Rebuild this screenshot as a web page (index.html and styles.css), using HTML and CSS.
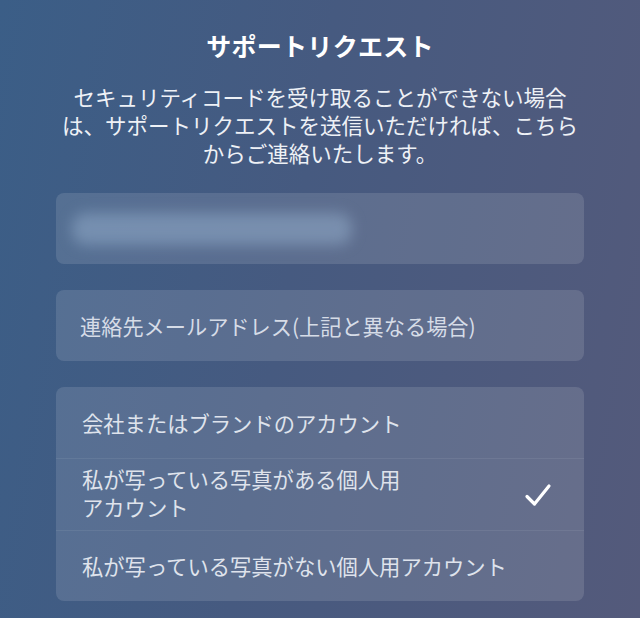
FILE: index.html
```html
<!DOCTYPE html>
<html lang="ja">
<head>
<meta charset="utf-8">
<title>サポートリクエスト</title>
<link rel="stylesheet" href="styles.css">
</head>
<body>
<main class="sheet">
  <h1 class="title">サポートリクエスト</h1>
  <p class="lead">セキュリティコードを受け取ることができない場合<br>は、サポートリクエストを送信いただければ、こちら<br>からご連絡いたします。</p>

  <div class="field field-filled">
    <span class="redacted"></span>
  </div>

  <div class="field">
    <span class="placeholder">連絡先メールアドレス(上記と異なる場合)</span>
  </div>

  <ul class="options">
    <li class="option">会社またはブランドのアカウント</li>
    <li class="option option-selected">
      <span class="option-label">私が写っている写真がある個人用<br>アカウント</span>
      <svg class="check" width="28" height="24" viewBox="0 0 28 24" aria-hidden="true">
        <path d="M3 13.5 L10.5 21 L25 3" fill="none" stroke="#ffffff" stroke-width="3.2" stroke-linecap="round" stroke-linejoin="round"/>
      </svg>
    </li>
    <li class="option">私が写っている写真がない個人用アカウント</li>
  </ul>
</main>
</body>
</html>
```

FILE: styles.css
```css
html, body {
  margin: 0;
  padding: 0;
  height: 100%;
}

body {
  background: linear-gradient(100deg, #3b5e87 0%, #465a80 45%, #545a7b 100%);
  font-family: "Noto Sans CJK JP", "Noto Sans", sans-serif;
  color: #ffffff;
  overflow: hidden;
}

.sheet {
  padding: 28px 56px 0;
  display: flex;
  flex-direction: column;
}

.title {
  margin: 0;
  text-align: center;
  font-size: 25px;
  font-weight: 700;
  line-height: 34px;
  letter-spacing: 0.3px;
}

.lead {
  margin: 21px -30px 0;
  text-align: center;
  font-size: 21.5px;
  line-height: 28px;
  color: #eef1f6;
}

.field {
  height: 71px;
  border-radius: 8px;
  background: rgba(255, 255, 255, 0.12);
  display: flex;
  align-items: center;
  padding: 0 24px;
  box-sizing: border-box;
  position: relative;
  overflow: hidden;
}

.field-filled {
  margin-top: 26px;
}

.field + .field {
  margin-top: 26px;
}

.redacted {
  display: block;
  width: 280px;
  height: 32px;
  margin-left: -8px;
  border-radius: 14px;
  background: rgba(150, 175, 205, 0.5);
  filter: blur(7px);
}

.placeholder {
  font-size: 21.2px;
  color: #d6dce7;
}

.options {
  list-style: none;
  margin: 26px 0 0;
  padding: 0;
  border-radius: 8px;
  background: rgba(255, 255, 255, 0.12);
  overflow: hidden;
}

.option {
  height: 71px;
  box-sizing: border-box;
  padding: 0 30px 0 26px;
  display: flex;
  align-items: center;
  justify-content: space-between;
  font-size: 21.3px;
  line-height: 28px;
  color: #dfe3ec;
}

.option + .option {
  border-top: 1px solid rgba(255, 255, 255, 0.07);
}

.option-selected {
  height: 72px;
}

.option-label {
  margin-top: -4px;
}

.check {
  flex: none;
  margin-right: 2px;
}
```
